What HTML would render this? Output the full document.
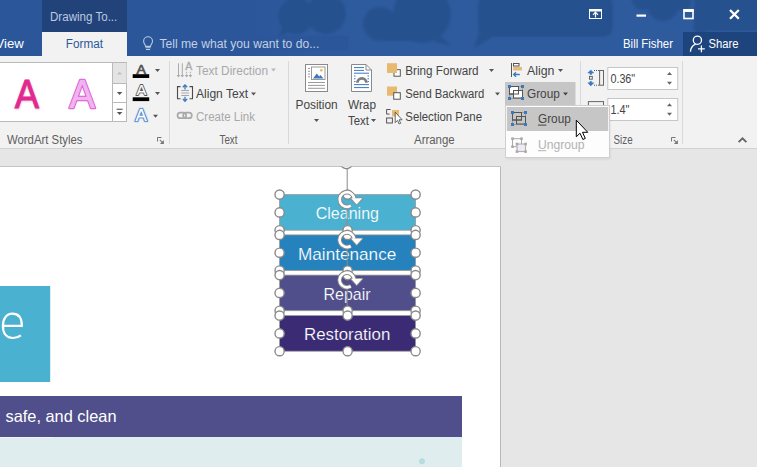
<!DOCTYPE html>
<html><head><meta charset="utf-8">
<style>
*{margin:0;padding:0}
html,body{width:757px;height:467px;overflow:hidden;background:#e6e6e6}
svg{display:block;position:absolute;left:0;top:0}
text{font-family:"Liberation Sans",sans-serif;white-space:pre}
</style></head>
<body>
<svg width="757" height="467" viewBox="0 0 757 467">
<rect x="0" y="0" width="757" height="467" fill="#e6e6e6" />
<rect x="0" y="0" width="757" height="56" fill="#2b579a" />
<defs><linearGradient id="lz" x1="0" x2="1" y1="0" y2="0"><stop offset="0" stop-color="#2b579a"/><stop offset="0.12" stop-color="#2e5b9e"/><stop offset="1" stop-color="#2e5b9e"/></linearGradient><filter id="bl" x="-5%" y="-50%" width="110%" height="200%"><feGaussianBlur stdDeviation="0.9"/></filter><clipPath id="tb"><rect x="0" y="0" width="757" height="56"/></clipPath></defs>
<rect x="250" y="0" width="507" height="56" fill="url(#lz)" />
<g clip-path="url(#tb)"><g fill="#27518f" filter="url(#bl)"><circle cx="296" cy="16" r="18"/><circle cx="326" cy="14" r="20"/><path d="M282,28 l-4,9 l14,-6 z"/><circle cx="380" cy="24" r="17"/><circle cx="422" cy="14" r="29"/><rect x="380" y="24" width="50" height="17"/><path d="M440,36 l12,10 l-18,-4 z"/><rect x="478" y="-5" width="135" height="42" rx="10"/><path d="M480,30 l-6,18 l20,-12 z"/><circle cx="663" cy="5" r="16"/><circle cx="643" cy="-1" r="11"/><circle cx="682" cy="2" r="9"/><rect x="694" y="-8" width="80" height="39" rx="12"/><circle cx="701" cy="26" r="8"/></g></g>
<rect x="127" y="35.7" width="221.7" height="14.6" fill="#2b579a" />
<rect x="42" y="0" width="85" height="32" fill="#224379" />
<rect x="42" y="32" width="85" height="24" fill="#f2f2f2" />
<rect x="683" y="32" width="74" height="24" fill="#1e447d" />
<rect x="0" y="56" width="757" height="92" fill="#f2f2f2" />
<rect x="0" y="148" width="757" height="1" fill="#d2d2d2" />
<text x="50" y="21.3" font-size="12.5" fill="#bcc9e0" textLength="67.3" lengthAdjust="spacingAndGlyphs" >Drawing To...</text>
<text x="-4.5" y="47.7" font-size="12.5" fill="#ffffff" textLength="28.3" lengthAdjust="spacingAndGlyphs" >View</text>
<text x="65.8" y="47.7" font-size="12.5" fill="#2b579a" textLength="37.2" lengthAdjust="spacingAndGlyphs" >Format</text>
<text x="159.4" y="47.7" font-size="12.5" fill="#c3cfe4" textLength="159.9" lengthAdjust="spacingAndGlyphs" >Tell me what you want to do...</text>
<text x="623" y="47.7" font-size="12.5" fill="#ffffff" textLength="50" lengthAdjust="spacingAndGlyphs" >Bill Fisher</text>
<text x="708.5" y="47.7" font-size="12.5" fill="#ffffff" textLength="30.0" lengthAdjust="spacingAndGlyphs" >Share</text>
<rect x="169.0" y="61" width="1" height="83" fill="#d9d9d9" />
<rect x="288.0" y="61" width="1" height="83" fill="#d9d9d9" />
<rect x="580.0" y="61" width="1" height="83" fill="#d9d9d9" />
<rect x="682.0" y="61" width="1" height="83" fill="#d9d9d9" />
<text x="7" y="144" font-size="12.5" fill="#5e5e5e" textLength="75.5" lengthAdjust="spacingAndGlyphs" >WordArt Styles</text>
<text x="196" y="75" font-size="12.5" fill="#a8a8a8" textLength="72" lengthAdjust="spacingAndGlyphs" >Text Direction</text>
<text x="196" y="98" font-size="12.5" fill="#444444" textLength="52" lengthAdjust="spacingAndGlyphs" >Align Text</text>
<text x="196" y="121" font-size="12.5" fill="#a8a8a8" textLength="59" lengthAdjust="spacingAndGlyphs" >Create Link</text>
<text x="219.5" y="144" font-size="12.5" fill="#5e5e5e" textLength="18.0" lengthAdjust="spacingAndGlyphs" >Text</text>
<text x="295.5" y="109" font-size="12.5" fill="#444444" textLength="42.19999999999999" lengthAdjust="spacingAndGlyphs" >Position</text>
<text x="348" y="109" font-size="12.5" fill="#444444" textLength="28" lengthAdjust="spacingAndGlyphs" >Wrap</text>
<text x="348" y="125" font-size="12.5" fill="#444444" textLength="21" lengthAdjust="spacingAndGlyphs" >Text</text>
<text x="405.3" y="75" font-size="12.5" fill="#444444" textLength="73.30000000000001" lengthAdjust="spacingAndGlyphs" >Bring Forward</text>
<text x="405.3" y="98" font-size="12.5" fill="#444444" textLength="79.09999999999997" lengthAdjust="spacingAndGlyphs" >Send Backward</text>
<text x="405.3" y="121" font-size="12.5" fill="#444444" textLength="76.69999999999999" lengthAdjust="spacingAndGlyphs" >Selection Pane</text>
<text x="414" y="144" font-size="12.5" fill="#5e5e5e" textLength="40.69999999999999" lengthAdjust="spacingAndGlyphs" >Arrange</text>
<text x="527" y="75" font-size="12.5" fill="#444444" textLength="27.5" lengthAdjust="spacingAndGlyphs" >Align</text>
<text x="613.5" y="144" font-size="12.5" fill="#5e5e5e" textLength="19.100000000000023" lengthAdjust="spacingAndGlyphs" >Size</text>
<path d="M271.0,68.5 h5 l-2.5,3 z" fill="#b8b8b8"/>
<path d="M251.0,92.5 h5 l-2.5,3 z" fill="#555"/>
<path d="M314.0,119.0 h5 l-2.5,3 z" fill="#555"/>
<path d="M371.0,119.0 h5 l-2.5,3 z" fill="#555"/>
<path d="M489.0,69.0 h5 l-2.5,3 z" fill="#555"/>
<path d="M495.0,92.5 h5 l-2.5,3 z" fill="#555"/>
<path d="M558.0,69.0 h5 l-2.5,3 z" fill="#555"/>
<rect x="0" y="166.5" width="500.5" height="301" fill="#ffffff" />
<rect x="0" y="166" width="500.5" height="1" fill="#c4c4c4" />
<rect x="500" y="166.5" width="1" height="301" fill="#b9b9b9" />
<rect x="0" y="286" width="50.2" height="96" fill="#4bb1d0" />
<rect x="0" y="396" width="462" height="41" fill="#504f8b" />
<rect x="0" y="437" width="462" height="30" fill="#dfedee" />
<rect x="0" y="437" width="53" height="1" fill="#eef6f7" />
<circle cx="422" cy="461.3" r="3" fill="#b5dde0"/>
<text x="5.5" y="421.5" font-size="16.5" fill="#ffffff" textLength="111.0" lengthAdjust="spacingAndGlyphs" >safe, and clean</text>
<path d="M2.9,325.8 H21.8 C21.8,317.6 18.2,313.7 12.3,313.7 C6.4,313.7 2.9,318.8 2.9,325.9 C2.9,333.6 6.7,338 12.9,338 C16.1,338 18.7,337 20.9,335.3" fill="none" stroke="#fff" stroke-width="2.2"/>
<defs><clipPath id="pg"><rect x="0" y="166.5" width="500" height="301"/></clipPath></defs>
<g clip-path="url(#pg)">
<rect x="279.6" y="194.6" width="136" height="35.6" fill="#4bb1d0" />
<rect x="279.6" y="234.9" width="136" height="35.6" fill="#2582bd" />
<rect x="279.6" y="275.1" width="136" height="35.6" fill="#504f8b" />
<rect x="279.6" y="315.6" width="136" height="35.6" fill="#3b2b75" />
<text x="315.7" y="219" font-size="17" fill="#ffffff" textLength="63.30000000000001" lengthAdjust="spacingAndGlyphs" stroke="#4bb1d0" stroke-width="0.18">Cleaning</text>
<text x="298" y="259.5" font-size="17" fill="#ffffff" textLength="98.30000000000001" lengthAdjust="spacingAndGlyphs" stroke="#2582bd" stroke-width="0.18">Maintenance</text>
<text x="323.5" y="299.5" font-size="17" fill="#ffffff" textLength="47.0" lengthAdjust="spacingAndGlyphs" stroke="#504f8b" stroke-width="0.18">Repair</text>
<text x="304" y="340" font-size="17" fill="#ffffff" textLength="86.30000000000001" lengthAdjust="spacingAndGlyphs" stroke="#3b2b75" stroke-width="0.18">Restoration</text>
<line x1="347.2" y1="167.6" x2="347.2" y2="194.6" stroke="#8c8c8c" stroke-width="1"/>
<line x1="347.2" y1="207.9" x2="347.2" y2="234.9" stroke="#8c8c8c" stroke-width="1"/>
<line x1="347.2" y1="248.10000000000002" x2="347.2" y2="275.1" stroke="#8c8c8c" stroke-width="1"/>
<line x1="347.2" y1="288.6" x2="347.2" y2="315.6" stroke="#8c8c8c" stroke-width="1"/>
<rect x="279.6" y="194.6" width="136" height="35.6" fill="none" stroke="#9a9a9a" stroke-width="0.8"/>
<rect x="279.6" y="234.9" width="136" height="35.6" fill="none" stroke="#9a9a9a" stroke-width="0.8"/>
<rect x="279.6" y="275.1" width="136" height="35.6" fill="none" stroke="#9a9a9a" stroke-width="0.8"/>
<rect x="279.6" y="315.6" width="136" height="35.6" fill="none" stroke="#9a9a9a" stroke-width="0.8"/>
<circle cx="279.6" cy="194.6" r="4.6" fill="#fff" stroke="#8a8a8a" stroke-width="1.4"/>
<circle cx="279.6" cy="230.2" r="4.6" fill="#fff" stroke="#8a8a8a" stroke-width="1.4"/>
<circle cx="347.6" cy="194.6" r="4.6" fill="#fff" stroke="#8a8a8a" stroke-width="1.4"/>
<circle cx="347.6" cy="230.2" r="4.6" fill="#fff" stroke="#8a8a8a" stroke-width="1.4"/>
<circle cx="415.6" cy="194.6" r="4.6" fill="#fff" stroke="#8a8a8a" stroke-width="1.4"/>
<circle cx="415.6" cy="230.2" r="4.6" fill="#fff" stroke="#8a8a8a" stroke-width="1.4"/>
<circle cx="279.6" cy="212.4" r="4.6" fill="#fff" stroke="#8a8a8a" stroke-width="1.4"/>
<circle cx="415.6" cy="212.4" r="4.6" fill="#fff" stroke="#8a8a8a" stroke-width="1.4"/>
<circle cx="279.6" cy="234.9" r="4.6" fill="#fff" stroke="#8a8a8a" stroke-width="1.4"/>
<circle cx="279.6" cy="270.5" r="4.6" fill="#fff" stroke="#8a8a8a" stroke-width="1.4"/>
<circle cx="347.6" cy="234.9" r="4.6" fill="#fff" stroke="#8a8a8a" stroke-width="1.4"/>
<circle cx="347.6" cy="270.5" r="4.6" fill="#fff" stroke="#8a8a8a" stroke-width="1.4"/>
<circle cx="415.6" cy="234.9" r="4.6" fill="#fff" stroke="#8a8a8a" stroke-width="1.4"/>
<circle cx="415.6" cy="270.5" r="4.6" fill="#fff" stroke="#8a8a8a" stroke-width="1.4"/>
<circle cx="279.6" cy="252.70000000000002" r="4.6" fill="#fff" stroke="#8a8a8a" stroke-width="1.4"/>
<circle cx="415.6" cy="252.70000000000002" r="4.6" fill="#fff" stroke="#8a8a8a" stroke-width="1.4"/>
<circle cx="279.6" cy="275.1" r="4.6" fill="#fff" stroke="#8a8a8a" stroke-width="1.4"/>
<circle cx="279.6" cy="310.70000000000005" r="4.6" fill="#fff" stroke="#8a8a8a" stroke-width="1.4"/>
<circle cx="347.6" cy="275.1" r="4.6" fill="#fff" stroke="#8a8a8a" stroke-width="1.4"/>
<circle cx="347.6" cy="310.70000000000005" r="4.6" fill="#fff" stroke="#8a8a8a" stroke-width="1.4"/>
<circle cx="415.6" cy="275.1" r="4.6" fill="#fff" stroke="#8a8a8a" stroke-width="1.4"/>
<circle cx="415.6" cy="310.70000000000005" r="4.6" fill="#fff" stroke="#8a8a8a" stroke-width="1.4"/>
<circle cx="279.6" cy="292.90000000000003" r="4.6" fill="#fff" stroke="#8a8a8a" stroke-width="1.4"/>
<circle cx="415.6" cy="292.90000000000003" r="4.6" fill="#fff" stroke="#8a8a8a" stroke-width="1.4"/>
<circle cx="279.6" cy="315.6" r="4.6" fill="#fff" stroke="#8a8a8a" stroke-width="1.4"/>
<circle cx="279.6" cy="351.20000000000005" r="4.6" fill="#fff" stroke="#8a8a8a" stroke-width="1.4"/>
<circle cx="347.6" cy="315.6" r="4.6" fill="#fff" stroke="#8a8a8a" stroke-width="1.4"/>
<circle cx="347.6" cy="351.20000000000005" r="4.6" fill="#fff" stroke="#8a8a8a" stroke-width="1.4"/>
<circle cx="415.6" cy="315.6" r="4.6" fill="#fff" stroke="#8a8a8a" stroke-width="1.4"/>
<circle cx="415.6" cy="351.20000000000005" r="4.6" fill="#fff" stroke="#8a8a8a" stroke-width="1.4"/>
<circle cx="279.6" cy="333.40000000000003" r="4.6" fill="#fff" stroke="#8a8a8a" stroke-width="1.4"/>
<circle cx="415.6" cy="333.40000000000003" r="4.6" fill="#fff" stroke="#8a8a8a" stroke-width="1.4"/>
<circle cx="346.5" cy="162.3" r="6.4" fill="#fff" stroke="#8a8a8a" stroke-width="1.4"/>
<path d="M354.13,198.48 A7.3,7.3 0 1 0 350.77,205.69" fill="none" stroke="#8a8a8a" stroke-width="4.5"/>
<path d="M351.09999999999997,198.3 h11.2 l-5.6,6.2 z" fill="#fff" stroke="#8a8a8a" stroke-width="1.8" stroke-linejoin="round"/>
<path d="M354.13,198.48 A7.3,7.3 0 1 0 350.77,205.69" fill="none" stroke="#fff" stroke-width="2.7"/>
<path d="M351.09999999999997,198.3 h11.2 l-5.6,6.2 z" fill="#fff"/>
<path d="M354.13,238.78 A7.3,7.3 0 1 0 350.77,245.99" fill="none" stroke="#8a8a8a" stroke-width="4.5"/>
<path d="M351.09999999999997,238.60000000000002 h11.2 l-5.6,6.2 z" fill="#fff" stroke="#8a8a8a" stroke-width="1.8" stroke-linejoin="round"/>
<path d="M354.13,238.78 A7.3,7.3 0 1 0 350.77,245.99" fill="none" stroke="#fff" stroke-width="2.7"/>
<path d="M351.09999999999997,238.60000000000002 h11.2 l-5.6,6.2 z" fill="#fff"/>
<path d="M354.13,278.98 A7.3,7.3 0 1 0 350.77,286.19" fill="none" stroke="#8a8a8a" stroke-width="4.5"/>
<path d="M351.09999999999997,278.8 h11.2 l-5.6,6.2 z" fill="#fff" stroke="#8a8a8a" stroke-width="1.8" stroke-linejoin="round"/>
<path d="M354.13,278.98 A7.3,7.3 0 1 0 350.77,286.19" fill="none" stroke="#fff" stroke-width="2.7"/>
<path d="M351.09999999999997,278.8 h11.2 l-5.6,6.2 z" fill="#fff"/>
</g>
<rect x="607.8" y="67.5" width="69.9" height="22" fill="#fff" stroke="#c6c6c6"/>
<rect x="607.8" y="98.5" width="69.9" height="22" fill="#fff" stroke="#c6c6c6"/>
<rect x="589.5" y="9.5" width="12" height="9" fill="none" stroke="#ffffff" stroke-width="1" />
<rect x="589" y="9" width="13" height="2.5" fill="#ffffff" />
<path d="M595.5,17.5 v-4.5 M593,14.8 l2.5,-2.6 l2.5,2.6" fill="none" stroke="#fff" stroke-width="1.2"/>
<rect x="636.5" y="14.5" width="9.5" height="2.2" fill="#ffffff" />
<rect x="684" y="10" width="9" height="8.5" fill="none" stroke="#ffffff" stroke-width="1.6" />
<rect x="683.4" y="9" width="10.2" height="3" fill="#ffffff" />
<path d="M730,10 l8.8,8.8 M738.8,10 l-8.8,8.8" stroke="#fff" stroke-width="2.3" fill="none"/>
<path d="M145.6,46.4 C145.4,44.6 143.6,43.6 143.6,41.2 A4.45,4.45 0 0 1 152.5,41.2 C152.5,43.6 150.7,44.6 150.5,46.4 Z" fill="none" stroke="#b9c7e0" stroke-width="1.1"/>
<rect x="145.5" y="47.2" width="5.1" height="1" fill="#b9c7e0" />
<rect x="146" y="49" width="4.1" height="1" fill="#b9c7e0" />
<circle cx="697.4" cy="40.2" r="4.1" fill="none" stroke="#fff" stroke-width="1.3"/>
<path d="M690.4,51.7 C690.8,47.5 693.2,45.2 695.6,44.2" fill="none" stroke="#fff" stroke-width="1.3"/>
<path d="M698,48.8 h6.8 M701.4,45.4 v6.8" stroke="#fff" stroke-width="1.25" fill="none"/>
<rect x="-1" y="62.5" width="127.5" height="59" fill="#ffffff" stroke="#b9b9b9" stroke-width="1" />
<rect x="112.5" y="63" width="14" height="20.5" fill="#e4e4e4" />
<line x1="112.5" y1="62.5" x2="112.5" y2="121.5" stroke="#b9b9b9" stroke-width="1" />
<line x1="112.5" y1="83.5" x2="126.5" y2="83.5" stroke="#b9b9b9" stroke-width="1" />
<line x1="112.5" y1="102.5" x2="126.5" y2="102.5" stroke="#b9b9b9" stroke-width="1" />
<path d="M117.0,74.5 h5 l-2.5,-3 z" fill="#c2c2c2"/>
<path d="M116.8,91.9 h5.6 l-2.8,3 z" fill="#555"/>
<rect x="116.6" y="108.7" width="6" height="1.1" fill="#555" />
<path d="M116.8,111.9 h5.6 l-2.8,3 z" fill="#555"/>
<text x="15.2" y="108.9" font-size="40" fill="#b090a4" stroke="#b090a4" stroke-width="0.9" opacity="0.45" filter="url(#bl)" textLength="24.3" lengthAdjust="spacingAndGlyphs">A</text>
<text x="14.7" y="107.6" font-size="40" fill="#e3288f" stroke="#e3288f" stroke-width="0.9" textLength="24.3" lengthAdjust="spacingAndGlyphs">A</text>
<text x="69.6" y="107.8" font-size="40" fill="#dc50d4" stroke="#dc50d4" stroke-width="2.6" stroke-linejoin="round" textLength="25.4" lengthAdjust="spacingAndGlyphs">A</text>
<text x="69.6" y="107.8" font-size="40" fill="#f0b4ee" stroke="#f0b4ee" stroke-width="0.7" textLength="25.4" lengthAdjust="spacingAndGlyphs">A</text>
<text x="136.6" y="73.6" font-size="13.4" fill="#555" stroke="#555" stroke-width="0.7" textLength="9.4" lengthAdjust="spacingAndGlyphs">A</text>
<rect x="132.7" y="74.2" width="16.5" height="3.8" fill="#000" />
<path d="M155.0,69.0 h5 l-2.5,3 z" fill="#555"/>
<text x="136.4" y="95.4" font-size="14" fill="#555" stroke="#555" stroke-width="2" stroke-linejoin="round" textLength="9.8" lengthAdjust="spacingAndGlyphs">A</text>
<text x="136.4" y="95.4" font-size="14" fill="#fff" stroke="#fff" stroke-width="0.2" textLength="9.8" lengthAdjust="spacingAndGlyphs">A</text>
<rect x="132.7" y="97.3" width="16.5" height="3.8" fill="#000" />
<path d="M155.0,92.0 h5 l-2.5,3 z" fill="#555"/>
<text x="135.6" y="120.6" font-size="15.6" fill="#d3e2f5" stroke="#d3e2f5" stroke-width="3.8" stroke-linejoin="round" textLength="11.2" lengthAdjust="spacingAndGlyphs">A</text>
<text x="135.6" y="120.6" font-size="15.6" fill="#3e78c2" stroke="#3e78c2" stroke-width="2.1" stroke-linejoin="round" textLength="11.2" lengthAdjust="spacingAndGlyphs">A</text>
<text x="135.6" y="120.6" font-size="15.6" fill="#fff" stroke="#fff" stroke-width="0.3" textLength="11.2" lengthAdjust="spacingAndGlyphs">A</text>
<path d="M153.0,114.7 h5 l-2.5,3 z" fill="#555"/>
<line x1="178.5" y1="63.3" x2="178.5" y2="76.5" stroke="#a9a9a9" stroke-width="1" />
<path d="M176.7,75 h3.6 l-1.8,2.6 z" fill="#a9a9a9"/>
<line x1="182.3" y1="63.3" x2="182.3" y2="76.5" stroke="#a9a9a9" stroke-width="1" />
<path d="M180.5,75 h3.6 l-1.8,2.6 z" fill="#a9a9a9"/>
<text x="185.3" y="69.8" font-size="10" fill="#a9a9a9" stroke="#a9a9a9" stroke-width="0.3" textLength="7" lengthAdjust="spacingAndGlyphs">A</text>
<line x1="186.6" y1="71.8" x2="186.6" y2="76" stroke="#a9a9a9" stroke-width="1" stroke-dasharray="1.5,1"/>
<path d="M184.79999999999998,75 h3.6 l-1.8,2.6 z" fill="#a9a9a9"/>
<line x1="190.4" y1="71.8" x2="190.4" y2="76" stroke="#a9a9a9" stroke-width="1" stroke-dasharray="1.5,1"/>
<path d="M188.6,75 h3.6 l-1.8,2.6 z" fill="#a9a9a9"/>
<path d="M180.5,86.6 h-3 v12.2 h3 M189.5,86.6 h3 v12.2 h-3" fill="none" stroke="#4a4a4a" stroke-width="1.1"/>
<line x1="181.3" y1="90.5" x2="189" y2="90.5" stroke="#a6a6a6" stroke-width="1" />
<line x1="181.3" y1="93" x2="189" y2="93" stroke="#a6a6a6" stroke-width="1" />
<line x1="181.3" y1="95.5" x2="189" y2="95.5" stroke="#a6a6a6" stroke-width="1" />
<path d="M185,85 v4.5 M182.8,87.3 l2.2,-2.4 l2.2,2.4" fill="none" stroke="#3b78c0" stroke-width="1.3"/>
<path d="M185,101.2 v-4.5 M182.8,98.9 l2.2,2.4 l2.2,-2.4" fill="none" stroke="#3b78c0" stroke-width="1.3"/>
<rect x="177.5" y="112.6" width="8.6" height="5.6" rx="2.8" fill="none" stroke="#a9a9a9" stroke-width="1.7"/>
<rect x="183.2" y="112.6" width="8.6" height="5.6" rx="2.8" fill="none" stroke="#a9a9a9" stroke-width="1.7"/>
<rect x="305.5" y="64.5" width="22" height="27" fill="#fff" stroke="#8a8a8a" stroke-width="1" />
<rect x="311.5" y="67" width="13.5" height="12.5" fill="#fff" stroke="#9a9a9a" stroke-width="1" />
<path d="M313,78.5 l3.8,-5 l2.4,3 l1.3,-1.6 l3,3.6 z" fill="#3b78c0"/>
<circle cx="321.3" cy="70.3" r="1.4" fill="#f0b860"/>
<line x1="308" y1="68.5" x2="310" y2="68.5" stroke="#9a9a9a" stroke-width="1" />
<line x1="308" y1="71.3" x2="310" y2="71.3" stroke="#9a9a9a" stroke-width="1" />
<line x1="308" y1="74.1" x2="310" y2="74.1" stroke="#9a9a9a" stroke-width="1" />
<line x1="308" y1="76.9" x2="310" y2="76.9" stroke="#9a9a9a" stroke-width="1" />
<line x1="308" y1="82.5" x2="325" y2="82.5" stroke="#9a9a9a" stroke-width="1" />
<line x1="308" y1="85.4" x2="325" y2="85.4" stroke="#9a9a9a" stroke-width="1" />
<line x1="308" y1="88.3" x2="325" y2="88.3" stroke="#9a9a9a" stroke-width="1" />
<path d="M351.5,64.5 h14.5 l5.5,5.5 v21.5 h-20 z" fill="#fff" stroke="#8a8a8a" stroke-width="1"/>
<path d="M366,64.5 v5.5 h5.5" fill="none" stroke="#8a8a8a" stroke-width="1"/>
<line x1="354" y1="67.6" x2="364" y2="67.6" stroke="#3b78c0" stroke-width="1" />
<line x1="354" y1="70.4" x2="364" y2="70.4" stroke="#3b78c0" stroke-width="1" />
<line x1="354" y1="73.2" x2="369" y2="73.2" stroke="#3b78c0" stroke-width="1" />
<line x1="354" y1="76" x2="355.5" y2="76" stroke="#3b78c0" stroke-width="1" />
<line x1="367.5" y1="76" x2="369" y2="76" stroke="#3b78c0" stroke-width="1" />
<line x1="354" y1="78.8" x2="355.5" y2="78.8" stroke="#3b78c0" stroke-width="1" />
<line x1="367.5" y1="78.8" x2="369" y2="78.8" stroke="#3b78c0" stroke-width="1" />
<line x1="354" y1="81.6" x2="355.5" y2="81.6" stroke="#3b78c0" stroke-width="1" />
<line x1="367.5" y1="81.6" x2="369" y2="81.6" stroke="#3b78c0" stroke-width="1" />
<line x1="354" y1="84.6" x2="369" y2="84.6" stroke="#3b78c0" stroke-width="1" />
<line x1="354" y1="87.6" x2="369" y2="87.6" stroke="#3b78c0" stroke-width="1" />
<path d="M357.4,82.8 A4.5,4.5 0 0 1 366.4,82.8" fill="none" stroke="#7d7d7d" stroke-width="2.8"/>
<rect x="394" y="69.7" width="6.3" height="6.5" fill="#fff" stroke="#555555" stroke-width="1" />
<rect x="387" y="63.2" width="10" height="9.8" fill="#e8b970" />
<rect x="387" y="86.5" width="10" height="9.2" fill="#e8b970" />
<rect x="393.7" y="92.7" width="6.6" height="6.5" fill="#fff" stroke="#555555" stroke-width="1" />
<path d="M390.6,109.5 h-4 v4.6 h3" fill="none" stroke="#555555" stroke-width="1"/>
<rect x="386.6" y="118" width="5.8" height="5" fill="none" stroke="#555555" stroke-width="1" />
<rect x="392" y="110" width="7" height="6.5" fill="#e8b970" />
<path d="M395.2,112.2 v10.4 l2.3,-2.2 l1.7,3.6 l1.5,-0.7 l-1.7,-3.5 h3.1 z" fill="#fff" stroke="#444" stroke-width="0.8"/>
<line x1="511.5" y1="63" x2="511.5" y2="77" stroke="#555555" stroke-width="1" />
<rect x="513.5" y="63.5" width="5.5" height="2.5" fill="#fff" stroke="#555555" stroke-width="1" />
<rect x="513.2" y="67" width="8.7" height="3.5" fill="#e8b970" />
<path d="M519.8,74.5 h-6 M516,72.2 l-2.4,2.3 l2.4,2.3" fill="none" stroke="#3b78c0" stroke-width="1.3"/>
<path d="M590.8,69.9 l3,3.1 h-2.1 v1.4 h-1.8 v-1.4 h-2.1 z" fill="#3b78c0" stroke="#3b78c0" stroke-width="0.5" stroke-linejoin="round"/>
<path d="M590.8,85.9 l3,-3.1 h-2.1 v-1.4 h-1.8 v1.4 h-2.1 z" fill="#3b78c0" stroke="#3b78c0" stroke-width="0.5" stroke-linejoin="round"/>
<rect x="589.5" y="76.4" width="2.8" height="2.8" fill="#f2f2f2" stroke="#666" stroke-width="1" />
<line x1="594" y1="70.5" x2="599" y2="70.5" stroke="#555" stroke-width="1" stroke-dasharray="1,1"/>
<line x1="594" y1="85.2" x2="599" y2="85.2" stroke="#555" stroke-width="1" stroke-dasharray="1,1"/>
<rect x="599.6" y="70.5" width="3.9" height="14.7" fill="none" stroke="#666" stroke-width="1" />
<rect x="588.4" y="101.6" width="15.1" height="6" fill="none" stroke="#666" stroke-width="1" />
<path d="M667.0,74.9 h5 l-2.5,-3 z" fill="#666"/>
<path d="M667.0,81.7 h5 l-2.5,3 z" fill="#666"/>
<path d="M667.0,106.3 h5 l-2.5,-3 z" fill="#666"/>
<path d="M667.0,112.7 h5 l-2.5,3 z" fill="#666"/>
<text x="610.4" y="82.8" font-size="12" fill="#444" textLength="24.800000000000068" lengthAdjust="spacingAndGlyphs" >0.36"</text>
<text x="610.4" y="113.8" font-size="12" fill="#444" textLength="19.100000000000023" lengthAdjust="spacingAndGlyphs" >1.4"</text>
<path d="M157.5,141.5 v-4 h4" fill="none" stroke="#777" stroke-width="1"/>
<path d="M159.8,139.8 l3,3" fill="none" stroke="#777" stroke-width="1.1"/>
<path d="M163.9,139.9 v4 h-4 z" fill="#777"/>
<path d="M671.5,141.5 v-4 h4" fill="none" stroke="#777" stroke-width="1"/>
<path d="M673.8,139.8 l3,3" fill="none" stroke="#777" stroke-width="1.1"/>
<path d="M677.9,139.9 v4 h-4 z" fill="#777"/>
<path d="M738.6,142.2 l3.9,-3.9 l3.9,3.9" fill="none" stroke="#666" stroke-width="1.9"/>
<rect x="505" y="82" width="70.5" height="24.5" fill="#c6c6c6" />
<text x="527" y="98" font-size="12.5" fill="#444444" textLength="32.799999999999955" lengthAdjust="spacingAndGlyphs" >Group</text>
<path d="M563.0,92.5 h5 l-2.5,3 z" fill="#444"/>
<rect x="506.5" y="107.5" width="104" height="52" fill="#000" opacity="0.06" filter="url(#bl)"/>
<rect x="505.5" y="105.5" width="104" height="52" fill="#fdfdfd" stroke="#cfcfcf" stroke-width="1"/>
<rect x="506.8" y="107" width="101.4" height="24" fill="#c6c6c6" />
<text x="538" y="123" font-size="12.5" fill="#444444" textLength="32.799999999999955" lengthAdjust="spacingAndGlyphs" >Group</text>
<rect x="538" y="124.6" width="8.4" height="1" fill="#444444" />
<text x="538" y="148.5" font-size="12.5" fill="#b2b2b2" textLength="46.60000000000002" lengthAdjust="spacingAndGlyphs" >Ungroup</text>
<rect x="538" y="150.2" width="8.2" height="1" fill="#b2b2b2" />
<path d="M511.5,86.5 h9.5 M509.5,88.5 v8.5 M511.5,98.5 h9.5 M522.5,88.5 v8.5" fill="none" stroke="#777" stroke-width="1" stroke-dasharray="1,1"/>
<rect x="509.5" y="86.5" width="9" height="7.5" fill="#ffffff" stroke="#555" stroke-width="1"/>
<rect x="513.5" y="90.5" width="9" height="7.5" fill="#ffffff" stroke="#555" stroke-width="1"/>
<rect x="509.5" y="86.5" width="9" height="7.5" fill="none" stroke="#555" stroke-width="1"/>
<rect x="508" y="85" width="3" height="3" fill="#3b78c0" />
<rect x="508" y="97" width="3" height="3" fill="#3b78c0" />
<rect x="521" y="85" width="3" height="3" fill="#3b78c0" />
<rect x="521" y="97" width="3" height="3" fill="#3b78c0" />
<path d="M514.5,112.5 h9.5 M512.5,114.5 v8.5 M514.5,124.5 h9.5 M525.5,114.5 v8.5" fill="none" stroke="#777" stroke-width="1" stroke-dasharray="1,1"/>
<rect x="512.5" y="112.5" width="9" height="7.5" fill="none" stroke="#555" stroke-width="1"/>
<rect x="516.5" y="116.5" width="9" height="7.5" fill="none" stroke="#555" stroke-width="1"/>
<rect x="512.5" y="112.5" width="9" height="7.5" fill="none" stroke="#555" stroke-width="1"/>
<rect x="511" y="111" width="3" height="3" fill="#3b78c0" />
<rect x="511" y="123" width="3" height="3" fill="#3b78c0" />
<rect x="524" y="111" width="3" height="3" fill="#3b78c0" />
<rect x="524" y="123" width="3" height="3" fill="#3b78c0" />
<rect x="512.5" y="138.7" width="9" height="8" fill="none" stroke="#a9a9a9" stroke-width="1"/>
<rect x="517" y="144" width="8.6" height="7.6" fill="#efe9f3" stroke="#a9a9a9" stroke-width="1"/>
<rect x="511.2" y="137.39999999999998" width="2.6" height="2.6" fill="#a9a9a9" />
<rect x="520.2" y="137.39999999999998" width="2.6" height="2.6" fill="#a9a9a9" />
<rect x="511.2" y="145.39999999999998" width="2.6" height="2.6" fill="#a9a9a9" />
<rect x="515.7" y="142.7" width="2.6" height="2.6" fill="#a9a9a9" />
<rect x="524.3000000000001" y="142.7" width="2.6" height="2.6" fill="#a9a9a9" />
<rect x="515.7" y="150.29999999999998" width="2.6" height="2.6" fill="#a9a9a9" />
<rect x="524.3000000000001" y="150.29999999999998" width="2.6" height="2.6" fill="#a9a9a9" />
<path d="M576.3,120.2 v16.6 l3.7,-3.6 l2.9,6.3 l2.4,-1.1 l-2.8,-6.1 h5.3 z" fill="#fff" stroke="#000" stroke-width="1" stroke-linejoin="miter"/>
</svg>
</body></html>
